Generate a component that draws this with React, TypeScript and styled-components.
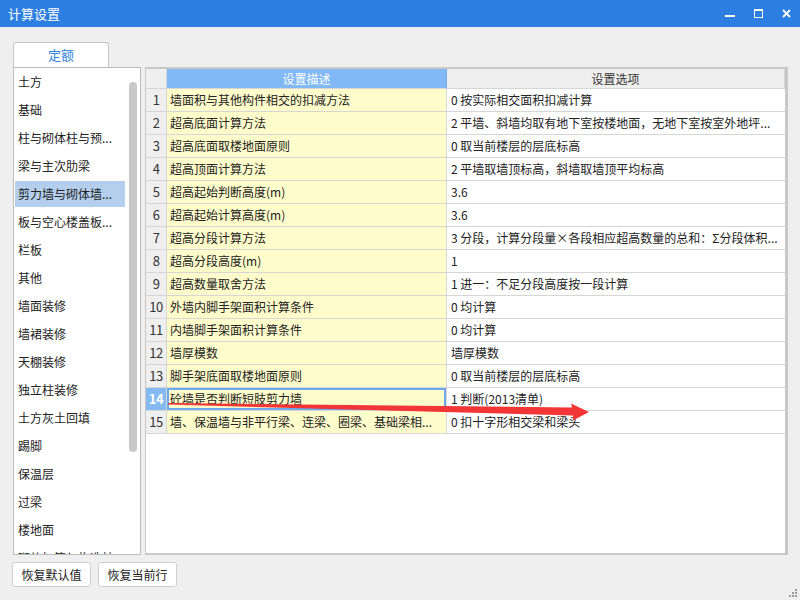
import styled, { createGlobalStyle } from 'styled-components';

const GlobalStyle = createGlobalStyle`
	html, body {
		margin: 0;
		padding: 0;
		background: #efefef;
	}
	* {
		box-sizing: border-box;
	}
`;

const Window = styled.div`
	width: 800px;
	height: 600px;
	display: flex;
	flex-direction: column;
	background: #efefef;
	font-family: 'Noto Sans CJK SC', 'Noto Sans', sans-serif;
	font-size: 12px;
	color: #222;
	overflow: hidden;
`;

const TitleBar = styled.div`
	height: 27px;
	flex: none;
	display: flex;
	align-items: center;
	justify-content: space-between;
	background: #2c7fe0;
	color: #fff;
	padding: 0 8px 0 8px;
`;

const TitleText = styled.span`
	font-size: 13px;
	line-height: 27px;
`;

const WinControls = styled.div`
	display: flex;
	align-items: center;
	gap: 19px;
	padding-right: 1px;
`;

const Body = styled.div`
	flex: 1;
	display: flex;
	flex-direction: column;
	padding: 15px 12px 0 13px;
`;

const TabStrip = styled.div`
	display: flex;
	height: 25px;
`;

const Tab = styled.div`
	width: 96px;
	height: 25px;
	background: #fff;
	border: 1px solid #c4c4c4;
	border-bottom: none;
	border-radius: 3px 3px 0 0;
	color: #2c7fe0;
	font-size: 13px;
	line-height: 24px;
	text-align: center;
`;

const Content = styled.div`
	display: flex;
	gap: 4px;
	height: 488px;
`;

const ListBox = styled.div`
	width: 128px;
	height: 100%;
	background: #fff;
	border: 1px solid #bcbcbc;
	display: flex;
	overflow: hidden;
`;

const ListItems = styled.div`
	width: 111px;
	padding: 1px 0 0 1px;
`;

const ListItem = styled.div<{ $selected?: boolean }>`
	height: 26px;
	margin-bottom: 2px;
	line-height: 26px;
	padding-left: 3px;
	white-space: nowrap;
	overflow: hidden;
	background: ${(p) => (p.$selected ? '#b4cfee' : 'transparent')};
`;

const ScrollTrack = styled.div`
	width: 15px;
	padding: 14px 0 0 4px;
`;

const ScrollThumb = styled.div`
	width: 8px;
	height: 370px;
	border-radius: 4px;
	background: #c8c8c8;
`;

const TablePanel = styled.div`
	position: relative;
	flex: 1;
	height: 100%;
	background: #fff;
	border-style: solid;
	border-color: #c8c8c8;
	border-width: 2px 3px 2px 1px;
`;

const Grid = styled.div`
	display: grid;
	grid-template-columns: 21px 280px 338px;
`;

const HeadCell = styled.div<{ $blue?: boolean }>`
	height: 20px;
	line-height: 19px;
	text-align: center;
	background: ${(p) => (p.$blue ? '#80b9f5' : '#efefef')};
	color: ${(p) => (p.$blue ? '#fff' : '#333')};
	border-right: 1px solid ${(p) => (p.$blue ? '#7aaee6' : '#d6d6d6')};
	border-bottom: 1px solid #d6d6d6;
	&:last-child {
		border-right: none;
	}
`;

const NumCell = styled.div<{ $active?: boolean }>`
	height: 23px;
	line-height: 22px;
	text-align: center;
	font-size: 13px;
	background: ${(p) => (p.$active ? '#84b9f1' : '#efefef')};
	color: ${(p) => (p.$active ? '#fff' : '#333')};
	font-weight: ${(p) => (p.$active ? 700 : 400)};
	border-right: 1px solid #d6d6d6;
	border-bottom: 1px solid #d6d6d6;
	letter-spacing: -0.5px;
`;

const DescCell = styled.div<{ $active?: boolean }>`
	height: 23px;
	line-height: 22px;
	padding-left: 3px;
	white-space: nowrap;
	overflow: hidden;
	background: #fffccc;
	border-right: 1px solid #d6d6d6;
	border-bottom: 1px solid #d6d6d6;
	box-shadow: ${(p) => (p.$active ? 'inset 0 0 0 2px #6aa9ec' : 'none')};
`;

const OptCell = styled.div`
	height: 23px;
	line-height: 22px;
	padding-left: 4px;
	white-space: nowrap;
	overflow: hidden;
	border-bottom: 1px solid #d6d6d6;
`;

const ArrowSvg = styled.svg`
	position: absolute;
	left: 0;
	top: 0;
	pointer-events: none;
`;

const Footer = styled.div`
	flex: 1;
	display: flex;
	justify-content: space-between;
	padding-top: 7px;
	margin-left: -1px;
	margin-right: -10px;
`;

const ButtonRow = styled.div`
	display: flex;
	gap: 7px;
	align-items: flex-start;
`;

const Button = styled.button`
	height: 25px;
	width: 79px;
	padding: 0;
	background: #fff;
	border: 1px solid #cfcfcf;
	border-radius: 3px;
	font-family: inherit;
	font-size: 12px;
	color: #222;
	line-height: 23px;
`;

const Grip = styled.svg`
	align-self: flex-end;
	margin-bottom: 2px;
`;

const categories = [
	'土方',
	'基础',
	'柱与砌体柱与预...',
	'梁与主次肋梁',
	'剪力墙与砌体墙...',
	'板与空心楼盖板...',
	'栏板',
	'其他',
	'墙面装修',
	'墙裙装修',
	'天棚装修',
	'独立柱装修',
	'土方灰土回填',
	'踢脚',
	'保温层',
	'过梁',
	'楼地面',
	'砌体加筋与构造柱',
];

const rows: [string, string][] = [
	['墙面积与其他构件相交的扣减方法', '0 按实际相交面积扣减计算'],
	['超高底面计算方法', '2 平墙、斜墙均取有地下室按楼地面，无地下室按室外地坪...'],
	['超高底面取楼地面原则', '0 取当前楼层的层底标高'],
	['超高顶面计算方法', '2 平墙取墙顶标高，斜墙取墙顶平均标高'],
	['超高起始判断高度(m)', '3.6'],
	['超高起始计算高度(m)', '3.6'],
	['超高分段计算方法', '3 分段，计算分段量×各段相应超高数量的总和：Σ分段体积...'],
	['超高分段高度(m)', '1'],
	['超高数量取舍方法', '1 进一：不足分段高度按一段计算'],
	['外墙内脚手架面积计算条件', '0 均计算'],
	['内墙脚手架面积计算条件', '0 均计算'],
	['墙厚模数', '墙厚模数'],
	['脚手架底面取楼地面原则', '0 取当前楼层的层底标高'],
	['砼墙是否判断短肢剪力墙', '1 判断(2013清单)'],
	['墙、保温墙与非平行梁、连梁、圈梁、基础梁相...', '0 扣十字形相交梁和梁头'],
];

function App() {
	const activeRow = 14;

	return (
		<Window>
			<GlobalStyle />
			<TitleBar>
				<TitleText>计算设置</TitleText>
				<WinControls>
					<svg width='10' height='10' viewBox='0 0 10 10'>
						<rect x='0' y='6' width='10' height='2' fill='#fff' />
					</svg>
					<svg width='9' height='9' viewBox='0 0 9 9'>
						<rect x='0.5' y='0.5' width='8' height='8' fill='none' stroke='#fff' strokeWidth='1' />
						<rect x='0' y='0' width='9' height='2' fill='#fff' />
					</svg>
					<svg width='9' height='9' viewBox='0 0 9 9'>
						<path d='M1 1 L8 8 M8 1 L1 8' stroke='#fff' strokeWidth='1.8' />
					</svg>
				</WinControls>
			</TitleBar>

			<Body>
				<TabStrip>
					<Tab>定额</Tab>
				</TabStrip>
				<Content>
					<ListBox>
						<ListItems>
							{categories.map((c, i) => (
								<ListItem key={c} $selected={i === 4}>
									{c}
								</ListItem>
							))}
						</ListItems>
						<ScrollTrack>
							<ScrollThumb />
						</ScrollTrack>
					</ListBox>

					<TablePanel>
						<Grid>
							<HeadCell />
							<HeadCell $blue>设置描述</HeadCell>
							<HeadCell>设置选项</HeadCell>
							{rows.map(([desc, opt], i) => {
								const n = i + 1;
								return [
									<NumCell key={`n${n}`} $active={n === activeRow}>
										{n}
									</NumCell>,
									<DescCell key={`d${n}`} $active={n === activeRow}>
										{desc}
									</DescCell>,
									<OptCell key={`o${n}`}>{opt}</OptCell>,
								];
							})}
						</Grid>
						{/* red annotation arrow drawn over the table */}
						<ArrowSvg width='639' height='484'>
							<polygon
								points='22,334 426,338.5 425,334.5 443,343 427,351.5 427,346.5 22,335.6'
								fill='#f23535'
							/>
						</ArrowSvg>
					</TablePanel>
				</Content>

				<Footer>
					<ButtonRow>
						<Button>恢复默认值</Button>
						<Button>恢复当前行</Button>
					</ButtonRow>
					<Grip width='9' height='9' viewBox='0 0 9 9'>
						<rect x='6' y='0' width='2' height='2' fill='#9a9a9a' />
						<rect x='3' y='3' width='2' height='2' fill='#9a9a9a' />
						<rect x='6' y='3' width='2' height='2' fill='#9a9a9a' />
						<rect x='0' y='6' width='2' height='2' fill='#9a9a9a' />
						<rect x='3' y='6' width='2' height='2' fill='#9a9a9a' />
						<rect x='6' y='6' width='2' height='2' fill='#9a9a9a' />
					</Grip>
				</Footer>
			</Body>
		</Window>
	);
}

export default App;
